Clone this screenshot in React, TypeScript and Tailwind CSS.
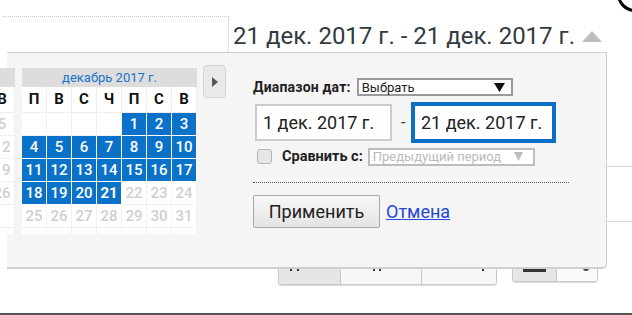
type Cell = { n: number | null; kind: "sel" | "end" | "off" | "empty" };

const dayNames = ["П", "В", "С", "Ч", "П", "С", "В"];

const buildMonth = (startCol: number, days: number, selTo: number): Cell[][] => {
    const cells: Cell[] = [];
    for (let i = 0; i < startCol; i++) cells.push({ n: null, kind: "empty" });
    for (let d = 1; d <= days; d++) {
        cells.push({ n: d, kind: d < selTo ? "sel" : d === selTo ? "end" : "off" });
    }
    while (cells.length % 7 !== 0) cells.push({ n: null, kind: "empty" });
    const rows: Cell[][] = [];
    for (let i = 0; i < cells.length; i += 7) rows.push(cells.slice(i, i + 7));
    return rows;
};

const Calendar = ({ title, rows }: { title: string; rows: Cell[][] }) => {
    return (
        <div className="w-[175px] shrink-0">
            {/* Month header */}
            <div className="h-[19px] bg-[#dddddd] text-[13px] leading-[19px] text-center text-[#1a73c8]">{title}</div>
            {/* Day names */}
            <div className="grid grid-cols-7 bg-white">
                {dayNames.map((d, i) => (
                    <div key={i} className="h-[26px] flex items-center justify-center text-[15px] font-bold text-[#111] border-r border-b border-[#eeeeee]">
                        {d}
                    </div>
                ))}
            </div>
            {/* Days */}
            <div className="grid grid-cols-7 bg-white">
                {rows.flat().map((c, i) => (
                    <div
                        key={i}
                        className={
                            c.kind === "sel" || c.kind === "end"
                                ? "h-[23px] flex items-center justify-center bg-[#0b72c9] text-white text-[15px] border-r border-b border-white " +
                                  (c.kind === "end" ? "font-bold" : "font-medium")
                                : "h-[23px] flex items-center justify-center text-[#cfcfcf] text-[15px] font-medium border-r border-b border-[#f0f0f0]"
                        }
                    >
                        {c.n}
                    </div>
                ))}
                {Array.from({ length: 7 }).map((_, i) => (
                    <div key={"x" + i} className="h-[6px] border-r border-[#f0f0f0]" />
                ))}
            </div>
        </div>
    );
};

export default function App() {
    const nov = buildMonth(2, 30, 0);
    const dec = buildMonth(4, 31, 21);

    return (
        <div className="relative w-[632px] h-[315px] overflow-hidden bg-white font-['Roboto','Liberation_Sans',sans-serif]">
            {/* Background: dotted box top-left */}
            <div className="absolute left-[3px] top-[16px] w-[226px] h-[38px] border-t border-r border-dotted border-[#cccccc]" />

            {/* Corner ring */}
            <div className="absolute left-[617px] top-[-24px] w-[36px] h-[36px] rounded-full border-[3px] border-black bg-white" />

            {/* Selected range title */}
            <div className="absolute left-[233px] top-[18px] flex items-center">
                <span className="text-[24px] text-[#333a40] tracking-[0px]">21 дек. 2017 г. - 21 дек. 2017 г.</span>
                <svg width="20" height="11" viewBox="0 0 20 11" className="ml-[7px] mt-[1px]">
                    <polygon points="10,0 20,11 0,11" fill="#bdbdbd" />
                </svg>
            </div>

            {/* Background lines right of the panel */}
            <div className="absolute left-[606px] top-[166px] w-[30px] border-t border-[#d6d6d6]" />
            <div className="absolute left-[606px] top-[221px] w-[30px] border-t border-[#d6d6d6]" />

            {/* Background buttons under the panel */}
            <div className="absolute left-[278px] top-[250px] h-[35px] w-[219px] flex rounded-[3px] border border-[#c8c8c8] shadow-[0_1px_1px_rgba(0,0,0,0.15)] overflow-hidden">
                <div className="w-[62px] bg-[#e6e6e6] border-r border-[#c8c8c8] relative">
                    <div className="absolute left-[11px] top-[17px] w-[2px] h-[3px] bg-[#333]" />
                    <div className="absolute left-[18px] top-[17px] w-[2px] h-[3px] bg-[#333]" />
                </div>
                <div className="w-[81px] bg-[#f7f7f7] border-r border-[#c8c8c8] relative">
                    <div className="absolute left-[32px] top-[17px] w-[2px] h-[3px] bg-[#333]" />
                    <div className="absolute left-[38px] top-[17px] w-[2px] h-[3px] bg-[#333]" />
                </div>
                <div className="flex-1 bg-[#f7f7f7] relative">
                    <div className="absolute left-[60px] top-[17px] w-[2px] h-[3px] bg-[#333]" />
                </div>
            </div>
            <div className="absolute left-[512px] top-[250px] h-[32px] w-[86px] flex rounded-[3px] border border-[#c8c8c8] shadow-[0_1px_1px_rgba(0,0,0,0.15)] overflow-hidden">
                <div className="w-[44px] bg-[#e6e6e6] border-r border-[#c8c8c8] relative">
                    <div className="absolute left-[10px] top-[17px] w-[23px] h-[4px] bg-[#333]" />
                </div>
                <div className="flex-1 bg-[#fafafa] relative">
                    <div className="absolute left-[26px] top-[16px] w-[6px] h-[4px] rounded-b-full bg-[#444]" />
                </div>
            </div>

            {/* Bottom rule */}
            <div className="absolute left-0 bottom-0 w-full h-[2px] bg-[#555555]" />

            {/* Date picker popup */}
            <div className="absolute left-[7px] top-[52px] w-[600px] h-[217px] bg-[#f5f5f5] border-t border-r border-[#cfcfcf] border-b-2 rounded-br-[5px] flex items-start pt-[15px]">
                <div className="ml-[-167px] flex gap-[7px]">
                    <Calendar title="ноябрь 2017 г." rows={nov} />
                    <Calendar title="декабрь 2017 г." rows={dec} />
                </div>

                {/* Next month button */}
                <button className="ml-[6px] mt-[-3px] w-[23px] h-[33px] rounded-[4px] border border-[#d4d4d4] bg-[#e9e9e9] flex items-center justify-center">
                    <svg width="6" height="10" viewBox="0 0 6 10">
                        <polygon points="0,0 6,5 0,10" fill="#555" />
                    </svg>
                </button>

                {/* Range form */}
                <div className="ml-[27px] mt-[10px] w-[320px] flex flex-col">
                    <div className="flex items-center h-[18px]">
                        <span className="text-[14px] font-bold text-[#222] tracking-[0.2px]">Диапазон дат:</span>
                        <div className="ml-[6px] w-[156px] h-[18px] border-2 border-[#9a9a9a] bg-white flex items-center justify-between pl-[3px] pr-[6px]">
                            <span className="text-[13px] text-[#222] leading-none">Выбрать</span>
                            <svg width="11" height="9" viewBox="0 0 11 9">
                                <polygon points="0,0 11,0 5.5,9" fill="#111" />
                            </svg>
                        </div>
                    </div>

                    <div className="flex items-center mt-[6px] ml-[2px]">
                        <div className="w-[137px] h-[37px] border-2 border-[#cccccc] bg-white flex items-center pl-[6px]">
                            <span className="text-[18px] text-[#222]">1 дек. 2017 г.</span>
                        </div>
                        <span className="ml-[9px] w-[10px] text-[16px] text-[#333]">-</span>
                        <div className="w-[145px] h-[41px] border-4 border-[#0b6fc6] bg-white flex items-center pl-[6px]">
                            <span className="text-[18px] text-[#222]">21 дек. 2017 г.</span>
                        </div>
                    </div>

                    <div className="flex items-center mt-[4px] ml-[4px] h-[19px]">
                        <div className="w-[15px] h-[15px] rounded-[3px] border border-[#b5b5b5] bg-[#e6e6e6]" />
                        <span className="ml-[10px] text-[14.5px] font-bold text-[#222]">Сравнить с:</span>
                        <div className="ml-[5px] w-[167px] h-[18px] border-2 border-[#bdbdbd] bg-white flex items-center justify-between pl-[3px] pr-[10px]">
                            <span className="text-[13px] text-[#bbbbbb] leading-none">Предыдущий период</span>
                            <svg width="9" height="9" viewBox="0 0 9 9">
                                <polygon points="0,0 9,0 4.5,9" fill="#bdbdbd" />
                            </svg>
                        </div>
                    </div>

                    <div className="mt-[16px] w-[316px] border-t border-dotted border-[#555555]" />

                    <div className="flex items-center mt-[12px]">
                        <button className="w-[127px] h-[33px] rounded-[2px] border border-[#a8a8a8] bg-gradient-to-b from-[#f7f7f7] to-[#e4e4e4] text-[18px] text-[#222]">
                            Применить
                        </button>
                        <a href="#" className="ml-[6px] text-[18px] text-[#2447d6] underline">
                            Отмена
                        </a>
                    </div>
                </div>
            </div>
        </div>
    );
}
